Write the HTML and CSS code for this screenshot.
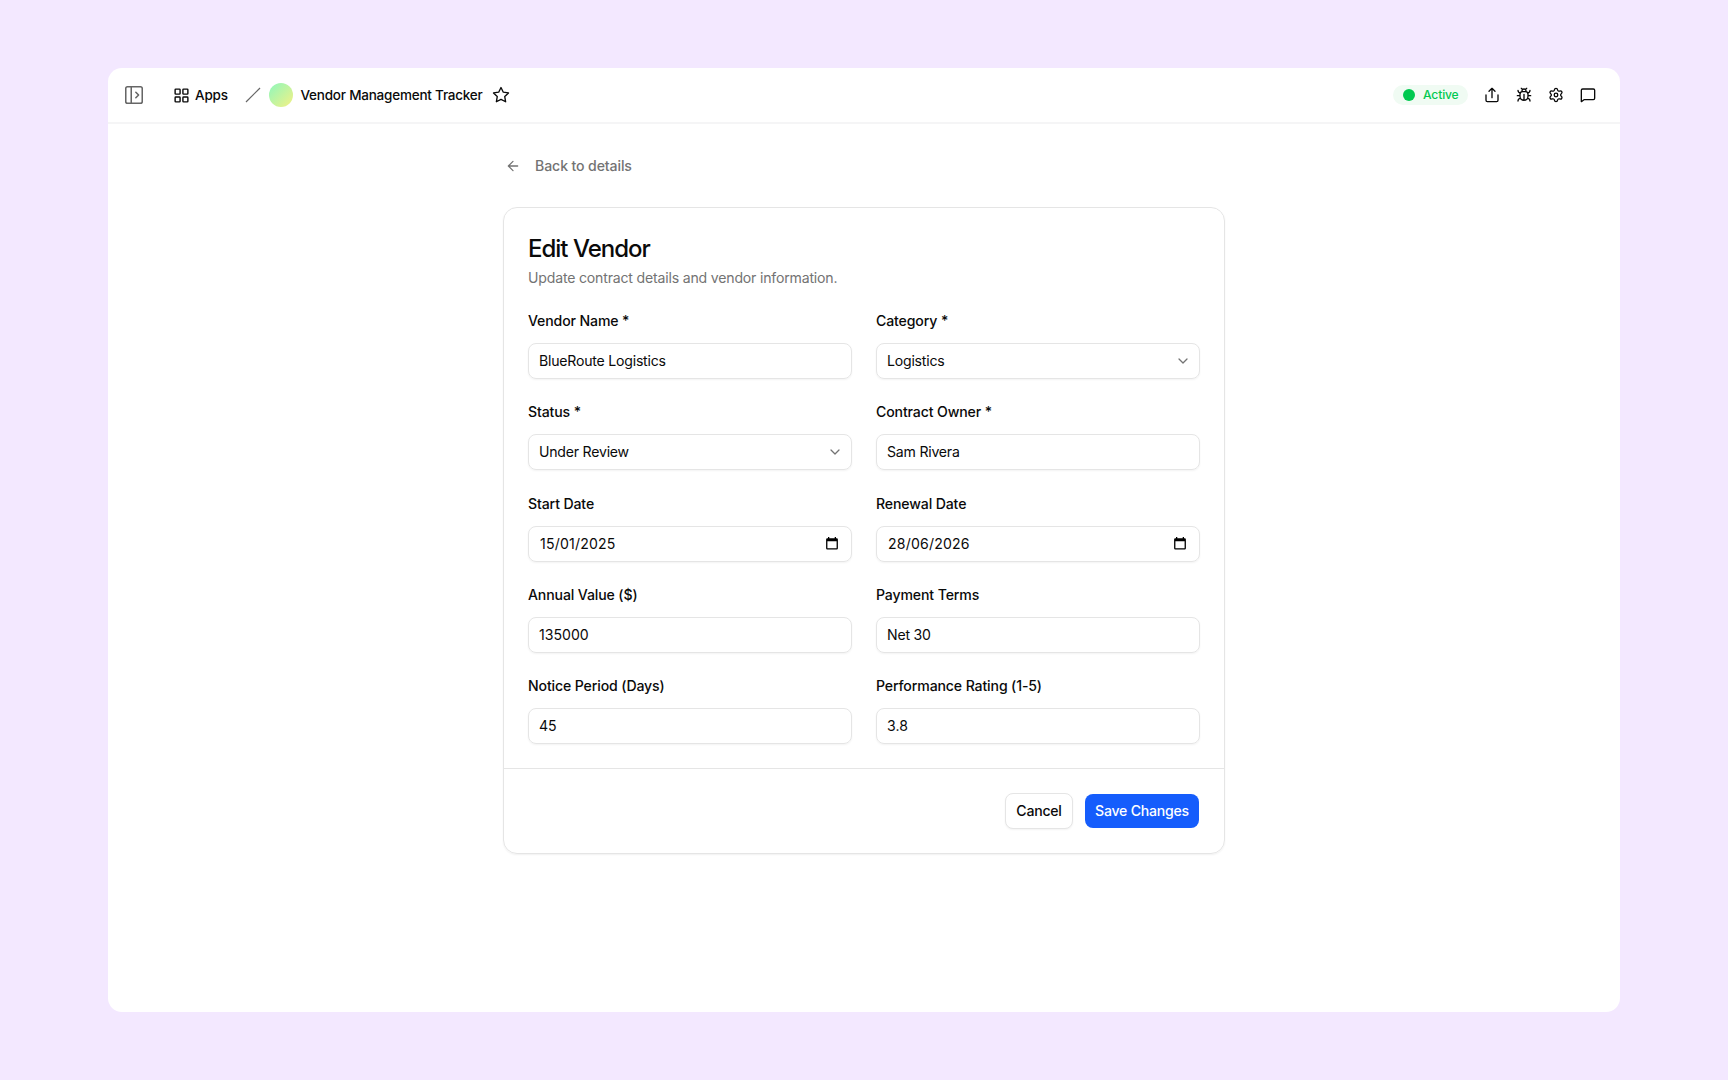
FILE: index.html
```html
<!DOCTYPE html>
<html lang="en">
<head>
<meta charset="utf-8">
<title>Vendor Management Tracker</title>
<link rel="stylesheet" href="styles.css">
</head>
<body>
<div class="window">
  <header class="topbar">
    <svg class="icon icon-panel" viewBox="0 0 24 24"><rect x="3" y="3" width="18" height="18" rx="2"/><path d="M9 3v18M14 9l3 3-3 3"/></svg>
    <svg class="icon icon-grid" viewBox="0 0 24 24"><rect x="3" y="3" width="7" height="7" rx="1"/><rect x="14" y="3" width="7" height="7" rx="1"/><rect x="14" y="14" width="7" height="7" rx="1"/><rect x="3" y="14" width="7" height="7" rx="1"/></svg>
    <span class="crumb crumb-apps">Apps</span>
    <svg class="slash" viewBox="0 0 16 16"><path d="M1 15 15 1"/></svg>
    <span class="avatar"></span>
    <span class="crumb crumb-title">Vendor Management Tracker</span>
    <svg class="icon icon-star" viewBox="0 0 24 24"><path d="m12 2 3.090 6.260L22 9.270l-5 4.870 1.180 6.880L12 17.770l-6.180 3.250L7 14.140 2 9.270l6.910-1.010z"/></svg>
    <div class="tools">
      <span class="status"><span class="dot"></span>Active</span>
      <svg class="icon" viewBox="0 0 24 24"><path d="M21 12v8a2 2 0 0 1-2 2H5a2 2 0 0 1-2-2v-8M12 16V2M7.500 6.500 12 2l4.500 4.500"/></svg>
      <svg class="icon" viewBox="0 0 24 24"><path d="m8 2 1.880 1.880M14.120 3.880 16 2M9 7.130v-1a3.003 3.003 0 1 1 6 0v1M12 20c-3.300 0-6-2.700-6-6v-3a4 4 0 0 1 4-4h4a4 4 0 0 1 4 4v3c0 3.300-2.700 6-6 6M12 20v-9M6.530 9C4.600 8.800 3 7.100 3 5M6 13H2M3 21c0-2.100 1.700-3.900 3.800-4M20.970 5c0 2.100-1.600 3.800-3.500 4M22 13h-4M17.200 17c2.100.1 3.800 1.900 3.800 4"/></svg>
      <svg class="icon" viewBox="0 0 24 24"><path d="M9.671 4.136a2.340 2.340 0 0 1 4.659 0 2.340 2.340 0 0 0 3.319 1.915 2.340 2.340 0 0 1 2.330 4.033 2.340 2.340 0 0 0 0 3.831 2.340 2.340 0 0 1-2.330 4.033 2.340 2.340 0 0 0-3.319 1.915 2.340 2.340 0 0 1-4.659 0 2.340 2.340 0 0 0-3.320-1.915 2.340 2.340 0 0 1-2.330-4.033 2.340 2.340 0 0 0 0-3.831A2.340 2.340 0 0 1 6.350 6.051a2.340 2.340 0 0 0 3.319-1.915"/><circle cx="12" cy="12" r="2.700"/></svg>
      <svg class="icon" viewBox="0 0 24 24"><path d="M22 5v12a2 2 0 0 1-2 2H6l-4 3V5a2 2 0 0 1 2-2h16a2 2 0 0 1 2 2z"/></svg>
    </div>
  </header>
  <main class="content">
    <a class="back"><svg class="icon icon-back" viewBox="0 0 24 24"><path d="m12 19-7-7 7-7M19 12H5"/></svg><span>Back to details</span></a>
    <section class="card">
      <div class="card-body">
        <h1 class="heading">Edit Vendor</h1>
        <p class="subtitle">Update contract details and vendor information.</p>
        <div class="fields">
          <div class="field"><span class="label">Vendor Name *</span><div class="control">BlueRoute Logistics</div></div>
          <div class="field"><span class="label">Category *</span><div class="control">Logistics<svg class="icon chevron" viewBox="0 0 24 24"><path d="m6 9 6 6 6-6"/></svg></div></div>
          <div class="field"><span class="label">Status *</span><div class="control">Under Review<svg class="icon chevron" viewBox="0 0 24 24"><path d="m6 9 6 6 6-6"/></svg></div></div>
          <div class="field"><span class="label">Contract Owner *</span><div class="control">Sam Rivera</div></div>
          <div class="field"><span class="label">Start Date</span><div class="control date">15/01/2025<svg class="calendar" viewBox="0 0 12 13"><path fill-rule="evenodd" d="M2 0h1.300v1.300h5.400V0H10v1.300h.7A1.200 1.200 0 0 1 11.900 2.500v8.800a1.200 1.200 0 0 1-1.200 1.200H1.300A1.200 1.200 0 0 1 .1 11.300V2.500A1.200 1.200 0 0 1 1.300 1.300H2zM1.400 4.200v7h9.200v-7z"/></svg></div></div>
          <div class="field"><span class="label">Renewal Date</span><div class="control date">28/06/2026<svg class="calendar" viewBox="0 0 12 13"><path fill-rule="evenodd" d="M2 0h1.300v1.300h5.400V0H10v1.300h.7A1.200 1.200 0 0 1 11.900 2.500v8.800a1.200 1.200 0 0 1-1.200 1.200H1.300A1.200 1.200 0 0 1 .1 11.300V2.500A1.200 1.200 0 0 1 1.300 1.300H2zM1.400 4.200v7h9.200v-7z"/></svg></div></div>
          <div class="field"><span class="label">Annual Value ($)</span><div class="control number">135000</div></div>
          <div class="field"><span class="label">Payment Terms</span><div class="control">Net 30</div></div>
          <div class="field"><span class="label">Notice Period (Days)</span><div class="control number">45</div></div>
          <div class="field"><span class="label">Performance Rating (1-5)</span><div class="control number">3.8</div></div>
        </div>
      </div>
      <footer class="card-footer">
        <button class="button cancel">Cancel</button>
        <button class="button save">Save Changes</button>
      </footer>
    </section>
  </main>
</div>
</body>
</html>
```
FILE: styles.css
```css
* { box-sizing: border-box; }
body {
  margin: 0;
  height: 1080px;
  padding: 68px 108px;
  background: #f3e8ff;
  color: #0a0a0a;
  font: 400 14.1px/20px Inter, "Liberation Sans", sans-serif;
  overflow: hidden;
}
.window { height: 944px; background: #fff; border-radius: 14px; overflow: hidden; }
.icon { width: 16px; height: 16px; fill: none; stroke: currentColor; stroke-width: 2; stroke-linecap: round; stroke-linejoin: round; flex: none; display: block; }

.topbar { height: 56px; border-bottom: 2px solid #f5f5f6; display: flex; align-items: center; padding: 0 24px 0 15px; }
.icon-panel { width: 22px; height: 22px; color: #666; stroke-width: 1.700; }
.icon-grid { margin-left: 27.500px; width: 17px; height: 17px; }
.crumb { font-size: 13.500px; font-weight: 500; letter-spacing: -.22px; white-space: nowrap; }
.crumb-apps { margin-left: 5.500px; width: 34px; letter-spacing: -.15px; }
.slash { width: 16px; height: 16px; margin-left: 15.500px; fill: none; stroke: #666; stroke-width: 1.200; }
.avatar { width: 24px; height: 24px; margin-left: 8px; border-radius: 50%; background: linear-gradient(135deg, #8ef7bd, #f4f184); }
.crumb-title { margin-left: 8px; width: 183px; }
.icon-star { margin-left: 8.500px; width: 18px; height: 18px; stroke-width: 1.800; }
.tools { margin-left: auto; display: flex; align-items: center; gap: 16px; }
.status { display: flex; align-items: center; gap: 8px; height: 20px; width: 75px; padding-left: 10px; border-radius: 10px; background: #f0fbf3; color: #00c950; font-size: 12.100px; font-weight: 500; letter-spacing: -.15px; }
.dot { width: 12px; height: 12px; border-radius: 50%; background: #00c950; }

.content { width: 722px; margin: 0 auto; padding-top: 32px; }
.back { display: flex; align-items: center; width: max-content; height: 20px; gap: 14.500px; padding-left: 1.600px; color: #737373; font-weight: 500; letter-spacing: -.12px; }
.icon-back { stroke-width: 1.900; }
.card { margin-top: 31px; height: 647px; border: 1px solid #e5e5e5; border-radius: 14px; box-shadow: 0 1px 2px rgba(0,0,0,.06); }
.card-body { padding: 24px 24px 0; height: 560px; }
.heading { margin: 0; font-size: 24px; line-height: 34px; font-weight: 500; letter-spacing: -1px; }
.subtitle { margin: 2px 0 0; color: #737373; letter-spacing: -.19px; }
.fields { margin-top: 23.200px; display: grid; grid-template-columns: 1fr 1fr; gap: 23.250px 24px; }
.field { display: flex; flex-direction: column; gap: 12px; }
.label { font-weight: 500; letter-spacing: -.13px; }
.control { height: 36px; display: flex; align-items: center; justify-content: space-between; padding: 0 10px; border: 1px solid #e5e5e5; border-radius: 8px; box-shadow: 0 1px 2px rgba(0,0,0,.05); letter-spacing: -.22px; }
.number { letter-spacing: 0; }
.chevron { color: #737373; stroke-width: 1.900; margin-right: -2px; }
.date { padding: 0 13px 0 11px; letter-spacing: .18px; }
.calendar { width: 12px; height: 13px; fill: #000; }
.card-footer { height: 84px; border-top: 1px solid #e5e5e5; padding-right: 25px; display: flex; align-items: center; justify-content: flex-end; gap: 12px; }
.button { height: 36px; padding: 0; font: inherit; font-weight: 500; letter-spacing: -.24px; border-radius: 8px; color: #0a0a0a; }
.cancel { width: 68px; background: #fff; border: 1px solid #e5e5e5; box-shadow: 0 1px 2px rgba(0,0,0,.05); }
.save { width: 114px; height: 34px; background: #155dfc; color: #fff; border: 0; }
```
